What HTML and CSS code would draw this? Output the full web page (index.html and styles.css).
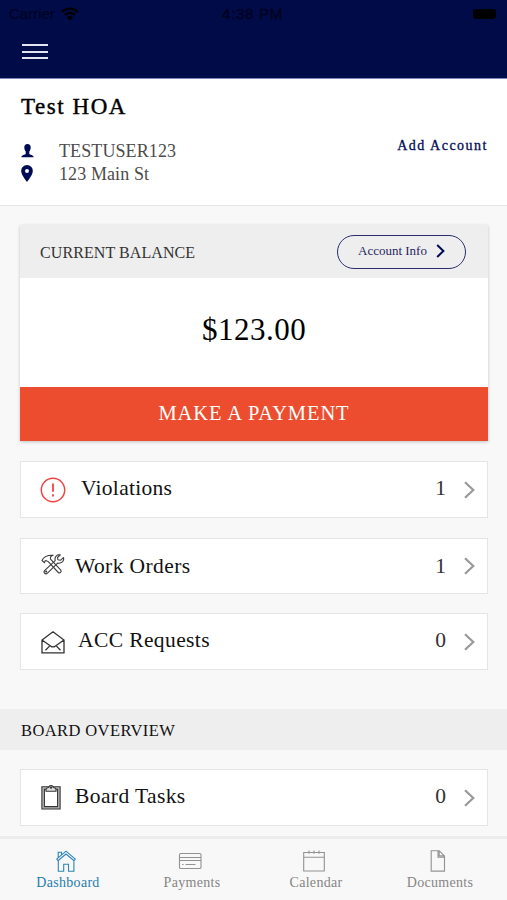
FILE: index.html
```html
<!DOCTYPE html>
<html lang="en">
<head>
<meta charset="utf-8">
<title>Test HOA</title>
<link rel="stylesheet" href="styles.css">
</head>
<body>
<div class="app">
  <header class="header">
    <div class="status">
      <div class="carrier"><span>Carrier</span>
        <svg width="18" height="14" viewBox="0 0 18 14" fill="none" stroke="#000" stroke-width="2.3"><path d="M1 4.8a11.5 11.5 0 0 1 16 0M4 8a7.2 7.2 0 0 1 10 0"/><path d="M9 13.5 6 10.5a4.3 4.3 0 0 1 6 0Z" fill="#000" stroke="none"/></svg>
      </div>
      <span class="time">4:38 PM</span>
      <span class="battery"></span>
    </div>
    <div class="menu"><i></i><i></i><i></i></div>
  </header>

  <section class="profile">
    <div class="profile-main">
      <h1>Test HOA</h1>
      <div class="info">
        <svg width="13" height="14" viewBox="0 0 13 14" fill="#000b55"><path d="M6.500 0C8.700 0 9.700 1.400 9.700 3.600 9.700 5.400 9 6.700 8.300 7.400V10C9 11 12.400 10.800 12.700 13.300H.3C.6 10.800 4 11 4.700 10V7.400C4 6.700 3.300 5.400 3.300 3.600 3.300 1.400 4.300 0 6.500 0Z"/></svg>
        <span>TESTUSER123</span>
      </div>
      <div class="info">
        <svg width="13" height="17" viewBox="0 0 13 17" fill="#000b55" fill-rule="evenodd"><path d="M6 0A5.800 5.800 0 0 1 11.800 6C11.800 9.500 8.300 13.700 6 17 3.700 13.700.2 9.500.2 6A5.800 5.800 0 0 1 6 0ZM6 4a2 2 0 1 0 0 4 2 2 0 0 0 0-4Z"/></svg>
        <span>123 Main St</span>
      </div>
    </div>
    <a class="add">Add Account</a>
  </section>

  <main class="content">
    <section class="balance">
      <div class="balance-head">
        <span>CURRENT BALANCE</span>
        <a class="pill">Account Info
          <svg width="9" height="14" viewBox="0 0 9 14" fill="none" stroke="#000b55" stroke-width="2"><path d="M1.200 1 7.400 7l-6.200 6"/></svg>
        </a>
      </div>
      <div class="amount">$123.00</div>
      <a class="pay">MAKE A PAYMENT</a>
    </section>

    <a class="row row-violations">
      <svg class="icon" width="26" height="26" viewBox="0 0 26 26" fill="none" stroke="#ef4444" stroke-width="1.500"><circle cx="13" cy="13" r="11.700"/><path d="M13 6.500v8.300M13 17.200v2.300" stroke-width="1.800"/></svg>
      <span class="label">Violations</span><span class="count">1</span>
      <svg class="chev" width="11" height="18" viewBox="0 0 11 18"><path d="m1 1.200 8.300 7.800L1 16.800"/></svg>
    </a>
    <a class="row row-orders">
      <svg class="icon" width="24" height="22" viewBox="0 0 24 22" fill="none" stroke="#3c3c3c" stroke-width="1.100" stroke-linejoin="round"><path d="M1 6.500C2.500 2.800 6 1 12.200 1.300 9.500 2.100 8.900 3.100 9.500 5.200L19.800 16.100C21 17.600 18.800 19.800 17.300 18.500L7.200 7.700C5.900 7.100 5.500 6.300 4.200 6.700L3.400 8.700Z"/><path d="M19.300.9C16 .3 13.300 2.800 14.200 6.600L3.800 16.300C1.800 18.500 4.500 21 6.500 19.100L16.600 9.100C20.500 9.700 23.500 7.200 22.500 3.600L19.400 6.300 16.900 5.700 16.500 3.500Z"/><circle cx="5.200" cy="17.600" r=".5"/></svg>
      <span class="label">Work Orders</span><span class="count">1</span>
      <svg class="chev" width="11" height="18" viewBox="0 0 11 18"><path d="m1 1.200 8.300 7.800L1 16.800"/></svg>
    </a>
    <a class="row row-requests">
      <svg class="icon" width="24" height="24" viewBox="0 0 24 24" fill="none" stroke="#303030" stroke-width="1.300"><path d="M1 22.800V10L12 1.800l11 8.200v12.800ZM1 10l10 7q1-.6 2 0L23 10M9 15.600l-4.500 4.600M15 15.600l4.500 4.600"/></svg>
      <span class="label">ACC Requests</span><span class="count">0</span>
      <svg class="chev" width="11" height="18" viewBox="0 0 11 18"><path d="m1 1.200 8.300 7.800L1 16.800"/></svg>
    </a>
  </main>

  <h2 class="section">BOARD OVERVIEW</h2>
  <div class="content board">
    <a class="row row-tasks">
      <svg class="icon" width="20" height="25" viewBox="0 0 20 25" fill="none" stroke="#333" stroke-width="1.100"><path d="M.9 1.800H19.100V24H.9ZM3.400 4.200h13.200v17.400H3.400Z" fill="#bbb" fill-rule="evenodd"/><path d="M5 6.300V4.200Q5.200 2.700 7.700 2.500 8 .6 10 .6t2.300 1.900Q14.800 2.700 15 4.200v2.100Z" fill="#ddd"/><circle cx="10" cy="2.700" r=".6"/></svg>
      <span class="label">Board Tasks</span><span class="count">0</span>
      <svg class="chev" width="11" height="18" viewBox="0 0 11 18"><path d="m1 1.200 8.300 7.800L1 16.800"/></svg>
    </a>
  </div>

  <nav class="tabs">
    <a class="tab active">
      <svg width="20" height="22" viewBox="0 0 20 22"><path d="M2.300 10.500v10.700h5.400v-7h4.800v7h5.400V10.500M.7 9.100 10 1.200l9.300 7.900-1.300 1.600L10 4 2 10.700ZM2.200 7.700V2.300h3.300v2.500"/></svg>
      <span>Dashboard</span>
    </a>
    <a class="tab">
      <svg width="24" height="22" viewBox="0 0 24 22"><rect x="1.500" y="3.500" width="21.500" height="15" rx="1.300"/><path d="M1.500 7.500H23M1.500 10.500H23M4 14.500h1.500M7.500 14.500h10"/></svg>
      <span>Payments</span>
    </a>
    <a class="tab">
      <svg width="22" height="22" viewBox="0 0 22 22"><path d="M.7 2.500h20.600v18.500H.7ZM.7 7.300h20.600M6 .6v3.200M11 .6v3.200M16 .6v3.200"/></svg>
      <span>Calendar</span>
    </a>
    <a class="tab">
      <svg width="16" height="22" viewBox="0 0 16 22"><path d="M1.200.7h8l5.300 5.300v15.100H1.200ZM8 .7v6.500h6.500M9.200.7v5.200h5.200"/></svg>
      <span>Documents</span>
    </a>
  </nav>
</div>
</body>
</html>
```
FILE: styles.css
```css
* { box-sizing: border-box; }
body { margin: 0; background: #f8f8f8; font-family: "Liberation Serif", "Times New Roman", serif; color: #111; }
svg { display: block; flex: none; }
.app { height: 900px; display: flex; flex-direction: column; overflow: hidden; }

.header { height: 79px; flex: none; background: #000b47; border-bottom: 1px solid #7c86b8; }
.status { height: 28px; padding: 0 11px 0 9px; display: grid; grid-template-columns: 1fr auto 1fr; align-items: center; font: 15px/28px "Liberation Sans", Arial, sans-serif; color: #00031f; }
.carrier { display: flex; align-items: center; gap: 6px; }
.time { letter-spacing: .700px; -webkit-text-stroke: .3px #00031f; }
.battery { justify-self: end; width: 23px; height: 10px; border-radius: 3px; background: #000; }
.menu { width: 26px; margin: 16px 0 0 22px; display: grid; gap: 4.500px; }
.menu i { height: 2px; background: #e2e4f2; }

.profile { height: 127px; flex: none; padding: 0 19px 0 21px; display: flex; justify-content: space-between; background: #fff; border-bottom: 1px solid #e6e6e6; }
h1 { margin: 15px 0 19px; font-size: 23px; line-height: 26px; font-weight: 400; letter-spacing: 1.550px; color: #000; -webkit-text-stroke: .4px #000; }
.info { height: 23px; display: flex; align-items: center; font-size: 18px; line-height: 23px; color: #4b4b4b; }
.info svg { margin-right: 25px; }
.info span { white-space: nowrap; padding-top: 1px; letter-spacing: .100px; }
.add { margin-top: 57px; font-size: 14px; line-height: 20px; letter-spacing: 1.500px; color: #000b55; -webkit-text-stroke: .3px #000b55; }

.content { padding: 19px 19px 0 20px; flex: none; }
.balance { box-shadow: 0 1px 3px rgba(0,0,0,.22); background: #fff; }
.balance-head { height: 53px; padding: 0 22px 0 20px; display: flex; align-items: center; justify-content: space-between; background: #eee; font-size: 16px; color: #333; }
.balance-head span { padding-top: 3px; letter-spacing: .080px; }
.pill { width: 129px; height: 34px; padding: 0 0 1px 20px; display: flex; align-items: center; gap: 9px; border: 1.500px solid #2a2e6e; border-radius: 17px; font-size: 13px; color: #25285f; white-space: nowrap; }
.amount { height: 109px; text-align: center; font-size: 31px; line-height: 104px; letter-spacing: .500px; color: #000; }
.pay { display: block; height: 54px; background: #eb4d2e; color: #fff; text-align: center; font-size: 20.500px; line-height: 53px; letter-spacing: .900px; }

.row { height: 57px; margin-top: 20px; padding: 0 12px 0 20px; display: flex; align-items: center; background: #fff; border: 1px solid #e5e5e5; font-size: 21.500px; letter-spacing: .400px; }
.label { flex: 1; margin-bottom: 2px; }
.count { margin-bottom: 2px; color: #333; letter-spacing: 0; }
.icon { margin-right: 12px; }
.chev { margin-left: 18px; fill: none; stroke: #999; stroke-width: 2.200; }
.row-violations { padding-left: 19px; letter-spacing: .300px; }
.row-violations .icon { margin-right: 15px; }
.row-orders { height: 56px; }
.row-orders .icon { margin-right: 10px; margin-bottom: 3px; }
.row-orders .label, .row-orders .count { margin-bottom: 0; }
.row-requests { margin-top: 19px; }
.row-requests .icon { margin-right: 13px; }
.row-tasks { margin-top: 0; }
.row-tasks .icon { margin-right: 14px; }

.section { margin: 39px 0 0; height: 41px; flex: none; padding-left: 21px; background: #eee; font-size: 16.500px; line-height: 44px; font-weight: 400; letter-spacing: .400px; color: #111; }

.tabs { height: 64px; margin-top: auto; flex: none; padding: 10px 5px 0 6px; display: grid; grid-template-columns: repeat(4, 1fr); background: #f8f8f8; border-top: 3px solid #ececec; }
.tab { display: flex; flex-direction: column; align-items: center; font-size: 14px; line-height: 20px; letter-spacing: .300px; color: #858585; }
.tab svg { fill: none; stroke: #929292; stroke-width: 1.100; margin: 1px 4px 1px 0; }
.tab.active { color: #287dae; }
.tab.active svg { stroke: #2d84b8; }
```
